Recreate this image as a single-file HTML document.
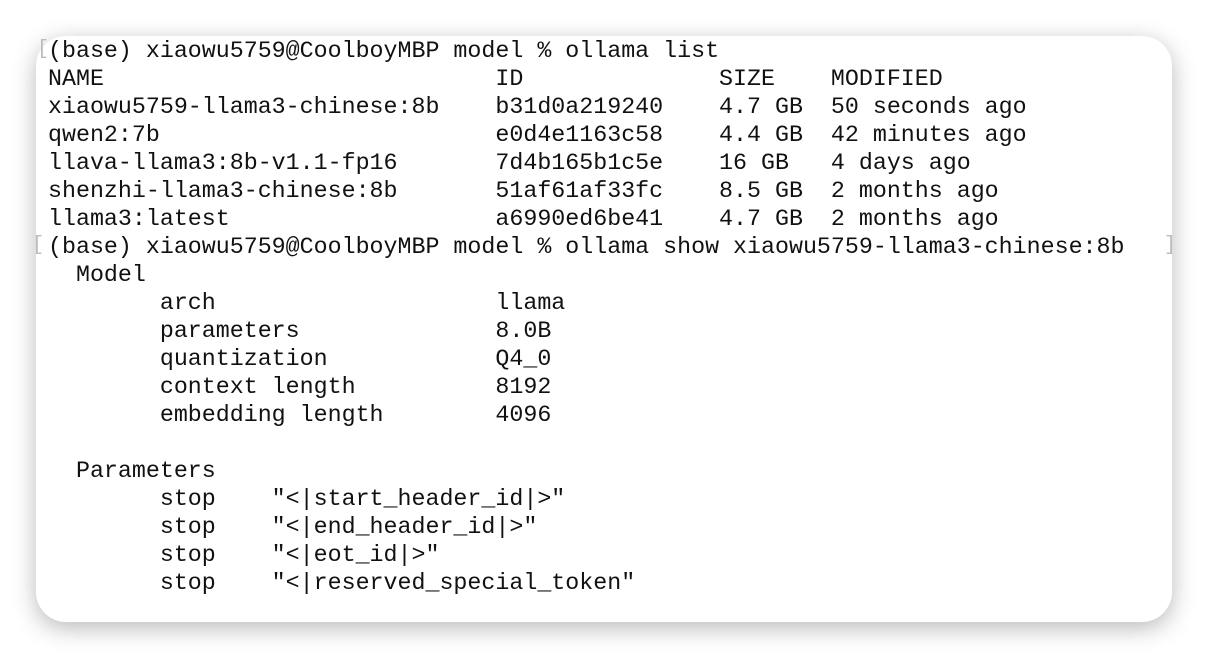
<!DOCTYPE html><html><head><style>
body{margin:0;width:1208px;height:658px;background:#fff;overflow:hidden;position:relative}
.card{position:absolute;left:36px;top:36px;width:1136px;height:586px;background:#fff;border-radius:30px;box-shadow:0 6px 24px rgba(0,0,0,0.28)}
pre{position:absolute;left:48px;top:37px;margin:0;font-family:"Liberation Mono",monospace;font-size:23.3px;line-height:28px;color:#111;letter-spacing:0}
.b{position:absolute;color:#bbb;font-family:"Liberation Mono",monospace;font-size:20px}
</style></head><body>
<div class="card"></div>
<span class="b" style="left:37px;top:38px">[</span>
<span class="b" style="left:32px;top:234px">[</span>
<span class="b" style="left:1164px;top:234px">]</span>
<pre>(base) xiaowu5759@CoolboyMBP model % ollama list
NAME                            ID              SIZE    MODIFIED
xiaowu5759-llama3-chinese:8b    b31d0a219240    4.7 GB  50 seconds ago
qwen2:7b                        e0d4e1163c58    4.4 GB  42 minutes ago
llava-llama3:8b-v1.1-fp16       7d4b165b1c5e    16 GB   4 days ago
shenzhi-llama3-chinese:8b       51af61af33fc    8.5 GB  2 months ago
llama3:latest                   a6990ed6be41    4.7 GB  2 months ago
(base) xiaowu5759@CoolboyMBP model % ollama show xiaowu5759-llama3-chinese:8b
  Model
        arch                    llama
        parameters              8.0B
        quantization            Q4_0
        context length          8192
        embedding length        4096

  Parameters
        stop    "&lt;|start_header_id|&gt;"
        stop    "&lt;|end_header_id|&gt;"
        stop    "&lt;|eot_id|&gt;"
        stop    "&lt;|reserved_special_token"</pre>
</body></html>
